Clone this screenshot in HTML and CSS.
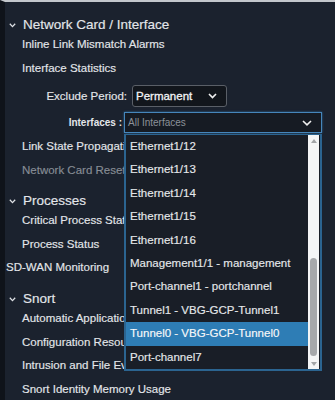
FILE: index.html
```html
<!DOCTYPE html>
<html>
<head>
<meta charset="utf-8">
<link rel="stylesheet" href="styles.css">
</head>
<body>
<div class="panel">
  <div class="section">
    <div class="heading">
      <svg class="chev" width="7" height="5" viewBox="0 0 7 5"><polyline points="0.8,0.8 3.5,3.6 6.2,0.8" fill="none" stroke="#dfe2e6" stroke-width="1.3"/></svg>
      <span>Network Card / Interface</span>
    </div>
    <div class="item">Inline Link Mismatch Alarms</div>
    <div class="item">Interface Statistics</div>
    <div class="form-row exclude">
      <div class="label label-exclude">Exclude Period:</div>
      <div class="select">
        <span>Permanent</span>
        <svg width="9" height="6" viewBox="0 0 9 6"><polyline points="1,1 4.5,4.6 8,1" fill="none" stroke="#f0f0f0" stroke-width="1.6"/></svg>
      </div>
    </div>
    <div class="form-row interfaces">
      <div class="label label-if">Interfaces :</div>
      <div class="combo">
        <div class="input">
          <span class="placeholder">All Interfaces</span>
          <svg width="10" height="6" viewBox="0 0 10 6"><polyline points="1,1 5,4.8 9,1" fill="none" stroke="#f0f0f0" stroke-width="1.6"/></svg>
        </div>
        <div class="list">
          <div class="options">
            <div class="opt">Ethernet1/12</div>
            <div class="opt">Ethernet1/13</div>
            <div class="opt">Ethernet1/14</div>
            <div class="opt">Ethernet1/15</div>
            <div class="opt">Ethernet1/16</div>
            <div class="opt">Management1/1 - management</div>
            <div class="opt">Port-channel1 - portchannel</div>
            <div class="opt">Tunnel1 - VBG-GCP-Tunnel1</div>
            <div class="opt selected">Tunnel0 - VBG-GCP-Tunnel0</div>
            <div class="opt">Port-channel7</div>
          </div>
          <div class="scrollbar">
            <div class="arrow-up"></div>
            <div class="track"><div class="thumb"></div></div>
            <div class="arrow-down"></div>
          </div>
        </div>
      </div>
    </div>
    <div class="item after-form clipped">Link State Propagation</div>
    <div class="item disabled clipped">Network Card Reset</div>
  </div>

  <div class="section">
    <div class="heading">
      <svg class="chev" width="7" height="5" viewBox="0 0 7 5"><polyline points="0.8,0.8 3.5,3.6 6.2,0.8" fill="none" stroke="#dfe2e6" stroke-width="1.3"/></svg>
      <span>Processes</span>
    </div>
    <div class="item clipped">Critical Process Statistics</div>
    <div class="item clipped">Process Status</div>
  </div>

  <div class="top-item clipped">SD-WAN Monitoring</div>

  <div class="section snort">
    <div class="heading">
      <svg class="chev" width="7" height="5" viewBox="0 0 7 5"><polyline points="0.8,0.8 3.5,3.6 6.2,0.8" fill="none" stroke="#dfe2e6" stroke-width="1.3"/></svg>
      <span>Snort</span>
    </div>
    <div class="item clipped">Automatic Application Bypass</div>
    <div class="item clipped">Configuration Resource Utilization</div>
    <div class="item clipped">Intrusion and File Events Rate</div>
    <div class="item">Snort Identity Memory Usage</div>
  </div>
</div>
</body>
</html>
```

FILE: styles.css
```css
html, body {
  margin: 0;
  padding: 0;
  background: #1b222e;
}

.panel {
  height: 398px;
  overflow: hidden;
  border-top: 2px solid #c3c7cc;
  border-left: 5px solid #0f131a;
  padding-top: 13px;
  font-family: "Liberation Sans", Arial, sans-serif;
  font-size: 11.5px;
  color: #e3e6ea;
  -webkit-text-stroke: 0.15px #e3e6ea;
  white-space: nowrap;
}

.section + .section,
.top-item + .section {
  margin-top: 9px;
}

.snort {
  margin-top: 9.5px !important;
}

.heading {
  height: 18px;
  display: flex;
  align-items: center;
  font-size: 13.5px;
  padding-left: 4px;
}

.chev {
  margin-right: 7px;
  margin-top: 2px;
}

.item {
  height: 23.5px;
  line-height: 23.5px;
  padding-left: 17px;
}

.top-item {
  height: 23.5px;
  line-height: 23.5px;
  padding-left: 1px;
}

.clipped {
  width: 119px;
  box-sizing: border-box;
  overflow: hidden;
}

.disabled {
  color: #878d95;
  -webkit-text-stroke: 0.15px #878d95;
}

.form-row {
  display: flex;
  align-items: center;
}

.exclude {
  margin-top: 4px;
  height: 24px;
}

.interfaces {
  margin-top: 4px;
  height: 21px;
}

.label-exclude {
  width: 122px;
  text-align: right;
  margin-right: 5px;
}

.label-if {
  width: 117px;
  text-align: right;
  margin-right: 2px;
  font-size: 10px;
  font-weight: bold;
  -webkit-text-stroke: 0;
}

.select {
  border: 1px solid #5a5f67;
  border-radius: 3px;
  background: #12161c;
  display: flex;
  align-items: center;
  justify-content: space-between;
  padding: 0 9px 0 3px;
  box-sizing: border-box;
  width: 95px;
  height: 22px;
  color: #f2f3f5;
  -webkit-text-stroke: 0.3px #f2f3f5;
}

.combo {
  position: relative;
  width: 198px;
  height: 21px;
}

.input {
  height: 21px;
  box-sizing: border-box;
  border: 1px solid #4686bb;
  box-shadow: 0 0 2px #2c6b9c;
  background: #161b23;
  display: flex;
  align-items: center;
  justify-content: space-between;
  padding: 0 9px 0 3px;
}

.placeholder {
  font-size: 10px;
  color: #8b9198;
  -webkit-text-stroke: 0;
}

.list {
  position: absolute;
  left: 0;
  top: 22px;
  width: 198px;
  box-sizing: border-box;
  border: 2px solid #2b6490;
  border-top: 1px solid #2b6490;
  background: #191e27;
  display: flex;
  z-index: 5;
}

.options {
  flex: 1;
}

.opt {
  height: 23.4px;
  line-height: 23.4px;
  padding-left: 4px;
  color: #e6e8ea;
}

.opt.selected {
  background: #2e7db5;
  color: #ffffff;
}

.scrollbar {
  width: 11px;
  background: #f4f5f6;
  display: flex;
  flex-direction: column;
  align-items: center;
  padding: 4px 0 3px;
  box-sizing: border-box;
  margin-right: 1px;
}

.arrow-up {
  width: 0;
  height: 0;
  border-left: 3.5px solid transparent;
  border-right: 3.5px solid transparent;
  border-bottom: 4px solid #a2a4a7;
}

.arrow-down {
  width: 0;
  height: 0;
  border-left: 3.5px solid transparent;
  border-right: 3.5px solid transparent;
  border-top: 4px solid #a2a4a7;
}

.track {
  flex: 1;
  display: flex;
  flex-direction: column;
  justify-content: flex-end;
  padding-bottom: 6px;
}

.thumb {
  width: 7px;
  height: 98px;
  border-radius: 4px;
  background: #a6a8ab;
}

.after-form {
  margin-top: 2px;
}
```
